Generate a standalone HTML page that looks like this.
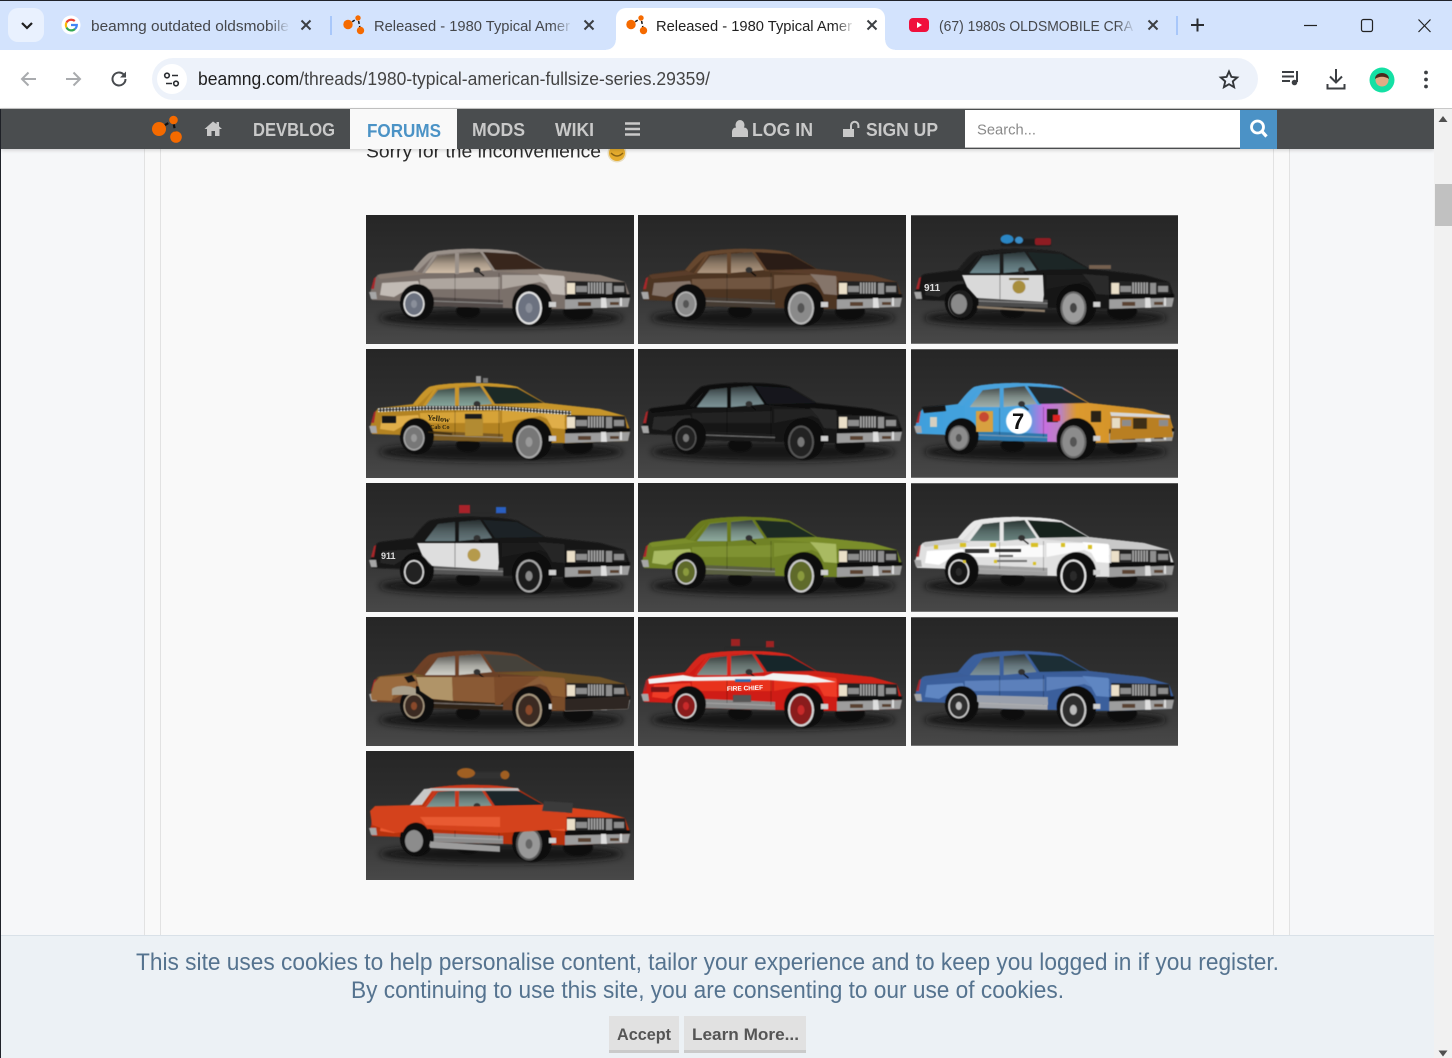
<!DOCTYPE html>
<html lang="en"><head><meta charset="utf-8"><title>Released - 1980 Typical American Fullsize Series</title>
<style>
html,body{margin:0;padding:0;width:1452px;height:1058px;overflow:hidden;background:#fff;font-family:"Liberation Sans",sans-serif}
.a{position:absolute}
svg{position:absolute;display:block;overflow:hidden}
.th{width:268px;height:129px}
</style></head><body>
<svg width="0" height="0" style="position:absolute">
<defs>
<linearGradient id="bgg" x1="0" y1="0" x2="0" y2="1"><stop offset="0" stop-color="#262626"/><stop offset=".5" stop-color="#303030"/><stop offset=".75" stop-color="#3c3c3c"/><stop offset="1" stop-color="#484848"/></linearGradient>
<linearGradient id="wsh" x1="0" y1="0" x2="0" y2="1"><stop offset="0" stop-color="#000" stop-opacity=".62"/><stop offset=".55" stop-color="#000" stop-opacity=".2"/><stop offset="1" stop-color="#000" stop-opacity="0"/></linearGradient>
<linearGradient id="race" gradientUnits="userSpaceOnUse" x1="0" y1="0" x2="268" y2="0"><stop offset="0" stop-color="#3f9fdc"/><stop offset=".43" stop-color="#49a5e0"/><stop offset=".5" stop-color="#c86fe0"/><stop offset=".56" stop-color="#bb83c0"/><stop offset=".62" stop-color="#dc9a2e"/><stop offset="1" stop-color="#c98a28"/></linearGradient>
<filter id="bl" x="-5%" y="-5%" width="110%" height="110%"><feGaussianBlur stdDeviation=".5"/></filter>
<filter id="bs" x="-10%" y="-60%" width="120%" height="220%"><feGaussianBlur stdDeviation="3.500"/></filter>
<symbol id="bg" viewBox="0 0 268 129"><rect width="268" height="129" fill="url(#bgg)"/><ellipse cx="135" cy="103" rx="122" ry="9" fill="#161616" filter="url(#bs)"/></symbol>
<symbol id="car" viewBox="0 0 268 129"><g filter="url(#bl)">
<ellipse cx="102" cy="96" rx="12" ry="7" fill="#0c0c0c"/><ellipse cx="212" cy="96" rx="15" ry="9" fill="#0c0c0c"/>
<path d="M4 78 8 66Q9 61 14 59L47 55C52 49 58 41 63 38 70 35 100 33 114 34 130 34 146 36 152 38L179 54 234 60 259 67 264 81 262 92 199 94 185 94 137 93 64 91 36 86 6 85Z" style="fill:var(--b)"/>
<path d="M128 56 179 54 234 60 259 67 201 66 190 61Z" style="fill:var(--t)"/>
<path d="M11 60 47 56 60 59 14 64Z" style="fill:var(--t)"/>
<path d="M54 64 134 62 134 74 54 74Z" style="fill:var(--h)"/>
<path d="M136 60 172 60 199 62 199 72 186 72 174 67 136 74Z" style="fill:var(--h)"/>
<path d="M172 59 198 61 199 80 186 79 180 68Z" style="fill:var(--g)"/><path d="M16 68 52 66 56 76 40 75 28 82 14 80Z" style="fill:var(--g)"/>
<path d="M66 82 137 85 137 93 64 91Z" style="fill:var(--l)"/><path d="M66 86 137 88.500" stroke="#bbb" stroke-width="1" opacity=".55"/>
<path d="M89 59V86M133 58V88" stroke="#000" stroke-width=".7" opacity=".35"/>
<path d="M63 38C70 35 100 33 114 34 130 34 146 36 152 38L154 41 100 37 68 40 51 57 47 55C52 49 58 41 63 38Z" style="fill:var(--r)"/>
<path d="M56 58 59 58 71 40 68 40ZM89 38h4v21h-4zM114 36 117 36 131 56 127 56Z" style="fill:var(--r)"/>
<path d="M59 58 72 41 89 39 89 58Z" style="fill:var(--w)"/><path d="M93 58 93 39 114 37 126 55Z" style="fill:var(--w)"/>
<path d="M59 58 72 41 89 39 89 58ZM93 58 93 39 114 37 126 55Z" fill="url(#wsh)"/>
<path d="M117 37 151 39 178 54 129 55Z" style="fill:var(--ws)"/>
<ellipse cx="111" cy="55" rx="3.500" ry="3" fill="#333"/><path d="M113 57l5 4" stroke="#111" stroke-width="1.500"/>
<ellipse cx="51" cy="87" rx="17" ry="18" fill="#070707"/><ellipse cx="166" cy="90" rx="20" ry="21" fill="#070707"/>
<ellipse cx="50" cy="88" rx="14.500" ry="16.500" fill="#101010"/><ellipse cx="48" cy="89" rx="10.500" ry="12.500" style="fill:var(--ww)"/><ellipse cx="48" cy="89" rx="9" ry="11" style="fill:var(--hub)"/><ellipse cx="48" cy="89" rx="3" ry="4" style="fill:var(--c)"/>
<ellipse cx="166" cy="92" rx="17.500" ry="19" fill="#101010"/><ellipse cx="163" cy="93" rx="13" ry="16.500" style="fill:var(--ww)"/><ellipse cx="163" cy="93" rx="11" ry="14.500" style="fill:var(--hub)"/><ellipse cx="163" cy="93" rx="3.500" ry="5" style="fill:var(--c)"/>
<path d="M201 66 259 67 261 80 201 80Z" fill="#222"/><rect x="201" y="68" width="8" height="11" fill="#eadfc8"/><rect x="210" y="71" width="11" height="6" fill="#8c8c8c"/>
<path d="M222 73h16" stroke="#a2a2a2" stroke-width="11" stroke-dasharray="1.800 1"/><rect x="240" y="68" width="6" height="11" fill="#8e8e8e"/><rect x="248" y="71" width="10" height="6" fill="#8c8c8c"/>
<path d="M199 80 264 79 264 83 199 85Z" fill="#0e0e0e"/><path d="M199 84.500 264 83 262 92 199 94Z" fill="#9d9d9d"/><path d="M212 87h13v4h-13zM244 87h9v3h-9z" fill="#5a4332"/><path d="M235 83h5l1 10h-6zM254 83h2v8h-2z" fill="#dedede"/>
<rect x="183" y="87" width="7" height="5" fill="#cfcfcf"/>
<path d="M8 63 10 62 8 74 5 74Z" fill="#a8282a"/><path d="M3 77h7l1 7H5z" fill="#a6a6a6"/>
</g></symbol>
<symbol id="dash" viewBox="0 0 268 129"><g filter="url(#bl)"><rect x="178" y="50" width="22" height="5" fill="#6a6058"/></g></symbol>
</defs></svg>

<!-- browser chrome -->
<div class="a" style="left:0;top:0;width:1452px;height:50px;background:#d3e3fd;border-top:1px solid #20232a;box-sizing:border-box"></div>
<div class="a" style="left:8px;top:8px;width:36px;height:34px;background:#e9f1fe;border-radius:10px"></div>
<div class="a" style="left:616px;top:8px;width:269px;height:42px;background:#fff;border-radius:10px 10px 0 0"></div>
<div class="a" style="left:0;top:50px;width:1452px;height:59px;background:#fff;border-radius:10px 10px 0 0;border-bottom:1px solid #c8c8c8;box-sizing:border-box"></div>
<div class="a" style="left:606px;top:40px;width:10px;height:10px;background:radial-gradient(circle at 0 0,#d3e3fd 9.5px,#fff 10px)"></div>
<div class="a" style="left:885px;top:40px;width:10px;height:10px;background:radial-gradient(circle at 100% 0,#d3e3fd 9.5px,#fff 10px)"></div>
<div class="a" style="left:152px;top:58px;width:1106px;height:42px;background:#edf2fa;border-radius:21px"></div>
<div class="a" style="left:157px;top:64px;width:30px;height:30px;background:#fff;border-radius:50%"></div>
<div class="a" style="left:330px;top:16px;width:2px;height:19px;background:#a8c7fa"></div>
<div class="a" style="left:1176px;top:16px;width:2px;height:19px;background:#a8c7fa"></div>

<!-- page -->
<div class="a" style="left:0;top:109px;width:1434px;height:949px;background:#f6f7f9;border-left:1px solid #20232a;box-sizing:border-box"></div>
<div class="a" style="left:144px;top:109px;width:1146px;height:840px;background:#f9f9f9;border-left:1px solid #e2e2e2;border-right:1px solid #e2e2e2;box-sizing:border-box"></div>
<div class="a" style="left:160px;top:109px;width:1114px;height:840px;background:#f9f9f9;border-left:1px solid #e2e2e2;border-right:1px solid #e2e2e2;box-sizing:border-box"></div>
<svg style="left:0;top:0" width="1452" height="200"><text x="366" y="157.500" font-size="18" fill="#2b2b2b" textLength="235" lengthAdjust="spacingAndGlyphs">Sorry for the inconvenience</text>
<circle cx="617" cy="153" r="9.500" fill="#e8ddc0"/><circle cx="617" cy="153" r="8" fill="#e5ac2e"/><path d="M611 153q6 6 12 0" fill="none" stroke="#8a6414" stroke-width="1.500"/></svg>

<!-- thumbnails -->
<svg class="th" viewBox="0 0 268 129" style="left:366px;top:215px;--b:#7a706a;--h:#aea69f;--t:#86796f;--g:#c2bbb5;--l:#524c48;--r:#9a918a;--w:#d0bda8;--ws:#38281f;--ww:#e4e4e4;--hub:#6c7280;--c:#8a8f9a"><use href="#bg"/><use href="#car"/></svg>
<svg class="th" viewBox="0 0 268 129" style="left:638px;top:215px;--b:#4e3423;--h:#6f5440;--t:#5a3e2a;--g:#85756a;--l:#453a32;--r:#66462e;--w:#ae967e;--ws:#2b1f18;--ww:#b8b8b8;--hub:#8a8a8a;--c:#555"><use href="#bg"/><use href="#car"/></svg>
<svg class="th" viewBox="0 0 267 129" style="left:911px;top:215px;width:267px;--b:#131313;--h:#1f1f1f;--t:#141414;--g:#2a2a2a;--l:#4c4c4c;--r:#1a1a1a;--w:#6f8a90;--ws:#1b2628;--ww:#6a6a6a;--hub:#9c9c9c;--c:#444"><use href="#bg"/><use href="#car"/><g filter="url(#bl)"><path d="M51 60H132L133 80 132 87 66 83 56 72Z" fill="#d9d9d9"/><path d="M89 60V84" stroke="#777" stroke-width=".8"/><circle cx="108" cy="72" r="6.500" fill="#a88e3e"/><path d="M98 64h20" stroke="#7a6a3a" stroke-width="2"/><ellipse cx="50" cy="89" rx="12" ry="14" fill="#1a1a1a"/><ellipse cx="48" cy="89" rx="8" ry="10" fill="#8a8a8a"/><path d="M66 92 134 96" stroke="#8a7a68" stroke-width="2.500"/><rect x="90" y="24" width="50" height="7" fill="#1f1f1f"/><ellipse cx="96" cy="24" rx="6.500" ry="4.500" fill="#2a86c4"/><ellipse cx="108" cy="25" rx="4" ry="3.500" fill="#3b8ec8"/><rect x="124" y="23" width="16" height="7" rx="2" fill="#8e1d24"/><rect x="178" y="50" width="22" height="4" fill="#75604f"/></g><text x="13" y="76" font-size="10" font-weight="bold" fill="#ddd">911</text></svg>

<svg class="th" viewBox="0 0 268 129" style="left:366px;top:349px;--b:#b38322;--h:#d6a338;--t:#c7952c;--g:#e0ae48;--l:#7a5a20;--r:#c9962c;--w:#88a89e;--ws:#1c2a28;--ww:#a8a8a8;--hub:#777;--c:#999"><use href="#bg"/><use href="#car"/><g filter="url(#bl)"><path d="M12 61 60 59 132 59 205 64" fill="none" stroke="#111" stroke-width="4"/><path d="M12 60 60 58 132 58 205 63M12 62.500 60 60.500 132 60.500 205 65.500" fill="none" stroke="#f0f0f0" stroke-width="1.300" stroke-dasharray="1.600 1.600"/><rect x="16" y="67" width="14" height="7" fill="#151515"/><rect x="99" y="66" width="18" height="21" fill="#b28b32"/><rect x="99" y="65" width="17" height="5" fill="#1a1a1a"/><rect x="110" y="27" width="5" height="7" fill="#999"/><rect x="117" y="29" width="5" height="5" fill="#777"/><path d="M62 83 86 85" stroke="#3a2c10" stroke-width="1.500"/></g><text x="61" y="71" font-size="8" font-weight="bold" fill="#32280e" font-family="'Liberation Serif',serif" transform="rotate(6 61 71)">Yellow</text><text x="64" y="80" font-size="6" font-weight="bold" fill="#32280e" font-family="'Liberation Serif',serif">Cab Co</text></svg>
<svg class="th" viewBox="0 0 268 129" style="left:638px;top:349px;--b:#141414;--h:#212121;--t:#0f0f0f;--g:#292929;--l:#1c1c1c;--r:#0f0f0f;--w:#7c9296;--ws:#12191b;--ww:#555;--hub:#222;--c:#777"><use href="#bg"/><use href="#car"/></svg>
<svg class="th" viewBox="0 0 267 129" style="left:911px;top:349px;width:267px;--b:url(#race);--h:url(#race);--t:url(#race);--g:url(#race);--l:#2f78ac;--r:#48a2dc;--w:#9fb0ac;--ws:#222a2e;--ww:#666;--hub:#8c8c8c;--c:#555"><use href="#bg"/><use href="#car"/><g filter="url(#bl)"><circle cx="108" cy="72" r="13" fill="#fff"/><rect x="65" y="62" width="17" height="21" fill="#d8a040"/><circle cx="73" cy="68" r="5" fill="#c64a30"/><rect x="136" y="60" width="11" height="13" fill="#1f1a16"/><rect x="142" y="66" width="7" height="6" fill="#d22"/><rect x="180" y="62" width="10" height="11" fill="#2a2015"/><path d="M200 64 259 66 262 88 199 91Z" fill="#b97f22"/><path d="M199 63 258 66 259 69 200 67Z" fill="#d8d8d8"/><rect x="201" y="69" width="8" height="10" fill="#e6dcc4"/><rect x="211" y="71" width="9" height="6" fill="#8c8c8c"/><rect x="222" y="69" width="14" height="11" fill="#3c2d17"/><rect x="248" y="71" width="9" height="6" fill="#8c8c8c"/><path d="M11 58 34 56 35 62 13 64Z" fill="#151515"/><rect x="19" y="68" width="7" height="10" fill="#d4cfc0"/></g><text x="101" y="80" font-size="22" font-weight="bold" fill="#111">7</text></svg>

<svg class="th" viewBox="0 0 268 129" style="left:366px;top:483px;--b:#131313;--h:#1f1f1f;--t:#141414;--g:#272727;--l:#555;--r:#171717;--w:#66787c;--ws:#1a2326;--ww:#aaa;--hub:#1e1e1e;--c:#888"><use href="#bg"/><use href="#car"/><g filter="url(#bl)"><path d="M51 60H132L133 80 132 87 66 83 56 72Z" fill="#dedede"/><path d="M89 60V84" stroke="#777" stroke-width=".8"/><circle cx="108" cy="72" r="6.500" fill="#b59a4c"/><ellipse cx="50" cy="88" rx="14.500" ry="16.500" fill="#0e0e0e"/><ellipse cx="48" cy="89" rx="10" ry="12" fill="#ddd"/><ellipse cx="48" cy="89" rx="8.500" ry="10.500" fill="#222"/><rect x="93" y="22" width="11" height="8" fill="#a8222a"/><rect x="130" y="24" width="10" height="7" fill="#2a5fc0"/><rect x="92" y="30" width="50" height="3" fill="#2a2a2a"/></g><text x="15" y="76" font-size="9" font-weight="bold" fill="#ddd">911</text></svg>
<svg class="th" viewBox="0 0 268 129" style="left:638px;top:483px;--b:#6f8225;--h:#7f9230;--t:#7a8d2a;--g:#a9ba62;--l:#5a5f42;--r:#6a7a1f;--w:#8eaa9e;--ws:#1c2a24;--ww:#ccc;--hub:#5f6a2c;--c:#8a9a3e"><use href="#bg"/><use href="#car"/></svg>
<svg class="th" viewBox="0 0 267 129" style="left:911px;top:483px;width:267px;--b:#e0e0e0;--h:#fafafa;--t:#c9c9c9;--g:#fff;--l:#a0a0a0;--r:#e8e8e8;--w:#6a8480;--ws:#16211f;--ww:#e8e8e8;--hub:#161616;--c:#2a2a2a"><use href="#bg"/><use href="#car"/><g filter="url(#bl)"><rect x="54" y="66" width="24" height="4" fill="#333"/><rect x="84" y="66" width="26" height="3" fill="#333"/><rect x="88" y="72" width="14" height="2" fill="#666"/><rect x="86" y="77" width="30" height="2" fill="#777"/><g fill="#d8c028"><rect x="23" y="62" width="4" height="4"/><rect x="49" y="60" width="6" height="4"/><rect x="79" y="60" width="6" height="4"/><rect x="120" y="60" width="7" height="4"/><rect x="150" y="60" width="4" height="4"/><rect x="177" y="62" width="4" height="4"/><rect x="52" y="77" width="3" height="3"/><rect x="83" y="77" width="3" height="3"/><rect x="122" y="79" width="3" height="3"/></g></g></svg>

<svg class="th" viewBox="0 0 268 129" style="left:366px;top:617px;--b:#6b4126;--h:#8a5c38;--t:#6f5228;--g:#8a5a30;--l:#2e2118;--r:#6e4028;--w:#d0d0c8;--ws:#45433b;--ww:#a89880;--hub:#3a2a22;--c:#8a4a2a"><use href="#bg"/><use href="#car"/><g filter="url(#bl)"><path d="M50 60H86L87 84 66 82 54 74Z" fill="#b09468"/><path d="M5 78 8 66 14 60 50 58 50 72 28 76 26 84 6 83Z" fill="#9a6a3c"/><path d="M86 60H128L130 86 87 84Z" fill="#8a5a34"/><path d="M128 60H172L160 68 146 76 134 88 129 88Z" fill="#7c4c2a"/><path d="M172 60 198 62 199 80 186 78 180 68Z" fill="#8f5f33"/><path d="M38 60 46 58 50 64 42 66Z" fill="#151515"/><path d="M26 72C30 68 44 68 50 72L50 78 26 78Z" fill="#aaa08c"/><path d="M199 82 264 79 262 92 199 94Z" fill="#2e2620"/><path d="M186 80 199 80 199 93 186 93Z" fill="#7a4e2a"/></g></svg>
<svg class="th" viewBox="0 0 268 129" style="left:638px;top:617px;--b:#cf1f12;--h:#e8321f;--t:#cf2014;--g:#ef3a26;--l:#888;--r:#d4261a;--w:#80908c;--ws:#18252a;--ww:#d8d8d8;--hub:#8a1a1f;--c:#c92a2a"><use href="#bg"/><use href="#car"/><g filter="url(#bl)"><path d="M10 62 45 58 56 60 126 59 135 56 170 58 198 65 170 66 130 63 60 64 44 64 11 67Z" fill="#f2f2f2"/><rect x="13" y="70" width="18" height="5" fill="#7a1812"/><rect x="93" y="22" width="9" height="7" fill="#9e2024"/><rect x="128" y="24" width="8" height="7" fill="#9e2024"/><rect x="87" y="30" width="54" height="3" fill="#2a2a2a"/><rect x="97" y="62" width="16" height="3" fill="#2a6cb0"/><rect x="95" y="78" width="18" height="7" fill="#555"/></g><text x="89" y="74" font-size="6.500" font-weight="bold" fill="#fff" transform="rotate(-2 89 74)">FIRE CHIEF</text></svg>
<svg class="th" viewBox="0 0 267 129" style="left:911px;top:617px;width:267px;--b:#3a5f9c;--h:#5b80bb;--t:#3a5d98;--g:#5f86c2;--l:#a3a5aa;--r:#3a5e9c;--w:#7d929a;--ws:#1f2d36;--ww:#ccc;--hub:#2e2e2e;--c:#bbb"><use href="#bg"/><use href="#car"/><path d="M66 78 137 80 137 88 66 85Z" fill="#9aa0ac" filter="url(#bl)"/></svg>

<svg class="th" viewBox="0 0 268 129" style="left:366px;top:751px;--b:#b8330f;--h:#e4512a;--t:#d8431a;--g:#ec5a30;--l:#8c8c8c;--r:#c8381a;--w:#84a09c;--ws:#1d2629;--ww:#555;--hub:#989898;--c:#666"><use href="#bg"/><use href="#car"/><g filter="url(#bl)"><path d="M4 60 9 55 47 54 60 56 178 54 200 62 200 78 134 82 60 78 30 82 6 74Z" fill="#d4421a"/><path d="M54 66 134 66 134 76 60 74Z" fill="#e85a30"/><path d="M44 54 58 38 68 37 56 54Z" fill="#c8c8c8"/><path d="M64 37 152 37 154 40 66 40Z" fill="#bbb"/><rect x="94" y="21" width="46" height="7" rx="2" fill="#333"/><ellipse cx="100" cy="22" rx="9" ry="5" fill="#a05f22"/><ellipse cx="139" cy="24" rx="4.500" ry="4.500" fill="#a05f22"/><path d="M178 50 207 52 206 62 176 60Z" fill="#3b3b3b"/><path d="M62 90 134 95 134 101 64 97Z" fill="#9c9c9c"/><ellipse cx="50" cy="88" rx="14.500" ry="16.500" fill="#101010"/><ellipse cx="48" cy="90" rx="9" ry="11" fill="#8c8c8c"/></g></svg>

<!-- nav -->
<div class="a" style="left:1px;top:109px;width:1433px;height:40px;background:#4a4d4f;box-shadow:0 1px 4px rgba(0,0,0,.18)"></div>
<div class="a" style="left:350px;top:109px;width:107px;height:40px;background:#f9f9f9"></div>
<div class="a" style="left:965px;top:110px;width:275px;height:38px;background:#fff;border-bottom:1px solid #bbb;box-sizing:border-box"></div>
<div class="a" style="left:1240px;top:110px;width:37px;height:39px;background:#4b92c6"></div>

<!-- scrollbar -->
<div class="a" style="left:1434px;top:109px;width:18px;height:949px;background:#f1f1f1"></div>
<div class="a" style="left:1435px;top:184px;width:17px;height:42px;background:#c1c1c1"></div>

<!-- cookie -->
<div class="a" style="left:1px;top:935px;width:1433px;height:123px;background:#ecf1f5;border-top:1px solid #d9e1e8;box-sizing:border-box"></div>
<div class="a" style="left:609px;top:1016px;width:70px;height:37px;background:#e1e1e1;border-bottom:3px solid #cacaca;box-sizing:border-box"></div>
<div class="a" style="left:684px;top:1016px;width:122px;height:37px;background:#e1e1e1;border-bottom:3px solid #cacaca;box-sizing:border-box"></div>

<!-- text and icons -->
<svg style="left:0;top:0" width="1452" height="1058" viewBox="0 0 1452 1058">
<defs>
<linearGradient id="fb" x1="0" x2="1"><stop offset="0" stop-color="#d3e3fd" stop-opacity="0"/><stop offset="1" stop-color="#d3e3fd"/></linearGradient>
<linearGradient id="fw" x1="0" x2="1"><stop offset="0" stop-color="#fff" stop-opacity="0"/><stop offset="1" stop-color="#fff"/></linearGradient>
<g id="logo"><path d="M0 0 10 -6.500 12.500 6" fill="none" stroke="#111" stroke-width="1.500" stroke-dasharray="3 2"/><circle cx="0" cy="0" r="4.700" fill="#f56a00"/><circle cx="10" cy="-6.500" r="2.700" fill="#f56a00"/><circle cx="12.500" cy="6" r="3.700" fill="#f56a00"/></g>
<g id="x"><path d="M-4.500 -4.500 4.500 4.500M4.500 -4.500 -4.500 4.500" stroke="#3c3f43" stroke-width="2"/></g>
</defs>
<g font-size="14.500" fill="#45474b">
<text x="91" y="31" textLength="198" lengthAdjust="spacingAndGlyphs">beamng outdated oldsmobile</text>
<text x="374" y="31" textLength="196" lengthAdjust="spacingAndGlyphs">Released - 1980 Typical Amer</text>
<text x="656" y="31" textLength="196" lengthAdjust="spacingAndGlyphs" fill="#1f1f1f">Released - 1980 Typical Amer</text>
<text x="939" y="31" textLength="194" lengthAdjust="spacingAndGlyphs">(67) 1980s OLDSMOBILE CRA</text>
</g>
<rect x="270" y="14" width="20" height="22" fill="url(#fb)"/><rect x="553" y="14" width="20" height="22" fill="url(#fb)"/><rect x="835" y="14" width="20" height="22" fill="url(#fw)"/><rect x="1116" y="14" width="20" height="22" fill="url(#fb)"/>
<path d="M22 23l5 5 5-5" fill="none" stroke="#1f1f1f" stroke-width="2.200"/>
<circle cx="71" cy="25" r="9.500" fill="#fff"/>
<path d="M66.500 22.500a5.500 5.500 0 0 1 8.300-1.500" fill="none" stroke="#ea4335" stroke-width="2.200"/><path d="M66.500 27.500a5.500 5.500 0 0 1 0-5" fill="none" stroke="#fbbc05" stroke-width="2.200"/><path d="M75 29a5.500 5.500 0 0 1-8.500-1.500" fill="none" stroke="#34a853" stroke-width="2.200"/><path d="M71 25h5.800a5.800 5.800 0 0 1-1.800 4" fill="none" stroke="#4285f4" stroke-width="2.200"/>
<use href="#x" x="306" y="25"/><use href="#x" x="589" y="25"/><use href="#x" x="872" y="25"/><use href="#x" x="1153" y="25"/>
<use href="#logo" x="348" y="24.500"/><use href="#logo" x="631" y="24.500"/>
<rect x="909" y="18" width="20" height="14" rx="4" fill="#f0103c"/><path d="M917 22l5 3-5 3z" fill="#fff"/>
<path d="M1191 25h13M1197.500 18.500v13" stroke="#2a2d31" stroke-width="2"/>
<path d="M1304 25.500h13" stroke="#222" stroke-width="1.200"/><rect x="1361.500" y="19.500" width="11" height="12" rx="2" fill="none" stroke="#222" stroke-width="1.200"/><path d="M1418.500 19.500l12 12.500M1430.500 19.500l-12 12.500" stroke="#222" stroke-width="1.200"/>
<g fill="none" stroke-width="2">
<path d="M36 79H22M28.500 72.500 22 79l6.500 6.500" stroke="#a9abae"/><path d="M66 79h14M73.500 72.500 80 79l-6.500 6.500" stroke="#a9abae"/>
<path d="M125.500 79a6.500 6.500 0 1 1-2-4.700L125.500 76.500" stroke="#474a4e"/>
</g>
<path d="M126 71.500v6h-6z" fill="#474a4e"/>
<g fill="none" stroke="#2a2d31" stroke-width="1.600"><circle cx="167" cy="75.500" r="2.300"/><path d="M172 75.500h6M166 83.500h6"/><circle cx="176" cy="83.500" r="2.300"/></g>
<text x="198" y="85" font-size="18" fill="#444" textLength="512" lengthAdjust="spacingAndGlyphs"><tspan fill="#1f1f1f">beamng.com</tspan>/threads/1980-typical-american-fullsize-series.29359/</text>
<path d="M1229 71.500l2.400 5.400 5.800.6-4.400 3.900 1.300 5.800-5.100-3-5.100 3 1.300-5.800-4.400-3.900 5.800-.6z" fill="none" stroke="#33363a" stroke-width="1.900"/>
<path d="M1282 72h12M1282 76.500h12M1282 81h8" stroke="#3c3f43" stroke-width="2"/><path d="M1297 71v11" stroke="#3c3f43" stroke-width="2"/><circle cx="1294.500" cy="82.500" r="2.800" fill="#3c3f43"/>
<path d="M1336 69v13M1330 76.500l6 6 6-6M1327.500 84v4.500h17V84" fill="none" stroke="#3c3f43" stroke-width="2"/>
<circle cx="1382" cy="80" r="12.500" fill="#14e0a4"/><circle cx="1382" cy="80" r="6.500" fill="#e2ab85"/><path d="M1375 79c0-8 14-8 14 0-4-3-10-3-14 0z" fill="#4a2a1c"/>
<circle cx="1426" cy="72.500" r="1.900" fill="#3c3f43"/><circle cx="1426" cy="79.500" r="1.900" fill="#3c3f43"/><circle cx="1426" cy="86.500" r="1.900" fill="#3c3f43"/>

<path d="M159 129 173 120 176 136" fill="none" stroke="#111" stroke-width="2.200" stroke-dasharray="4 3"/><circle cx="159" cy="129" r="7" fill="#f56a00"/><circle cx="173.500" cy="120" r="4.300" fill="#f56a00"/><circle cx="176" cy="137" r="5.800" fill="#f56a00"/>
<path d="M213 121.500 204.500 129h2.500v7h4.500v-5h3.500v5h4.500v-7h2.500l-3-2.700V122h-2.500v2z" fill="#c8c8c8"/>
<g font-size="18" font-weight="bold" fill="#c9c9c9">
<text x="253" y="136" textLength="82" lengthAdjust="spacingAndGlyphs">DEVBLOG</text>
<text x="367" y="137" textLength="74" lengthAdjust="spacingAndGlyphs" fill="#4b93c6">FORUMS</text>
<text x="472" y="136" textLength="53" lengthAdjust="spacingAndGlyphs">MODS</text>
<text x="555" y="136" textLength="39" lengthAdjust="spacingAndGlyphs">WIKI</text>
<text x="752" y="136" textLength="61" lengthAdjust="spacingAndGlyphs">LOG IN</text>
<text x="866" y="136" textLength="72" lengthAdjust="spacingAndGlyphs">SIGN UP</text>
</g>
<path d="M625 123.500h15M625 129h15M625 134.500h15" stroke="#c9c9c9" stroke-width="2.600"/>
<ellipse cx="740" cy="125" rx="4.500" ry="5" fill="#c9c9c9"/><path d="M732 137v-5c0-3 2-4.500 4-4.500h8c2 0 4 1.500 4 4.500v5z" fill="#c9c9c9"/>
<rect x="843" y="129" width="11" height="8" fill="#c9c9c9"/><path d="M851 129v-3.500a3.700 3.700 0 0 1 7.400 0v2.500" fill="none" stroke="#c9c9c9" stroke-width="2"/>
<text x="977" y="134.500" font-size="15" fill="#8a8a8a" textLength="59" lengthAdjust="spacingAndGlyphs">Search...</text>
<circle cx="1257.500" cy="127" r="6" fill="none" stroke="#fff" stroke-width="2.800"/><path d="M1262 131.500l4.500 5" stroke="#fff" stroke-width="3.200"/>
<path d="M1443 116l-4.500 6h9zM1443 1056.500l-4.500-6h9z" fill="#505050"/>
<g font-size="24" fill="#55738f">
<text x="136" y="970" textLength="1143" lengthAdjust="spacingAndGlyphs">This site uses cookies to help personalise content, tailor your experience and to keep you logged in if you register.</text>
<text x="351" y="998" textLength="713" lengthAdjust="spacingAndGlyphs">By continuing to use this site, you are consenting to our use of cookies.</text>
</g>
<g font-size="17" font-weight="bold" fill="#555">
<text x="617" y="1040" textLength="54" lengthAdjust="spacingAndGlyphs">Accept</text>
<text x="692" y="1040" textLength="107" lengthAdjust="spacingAndGlyphs">Learn More...</text>
</g>
</svg>
</body></html>
